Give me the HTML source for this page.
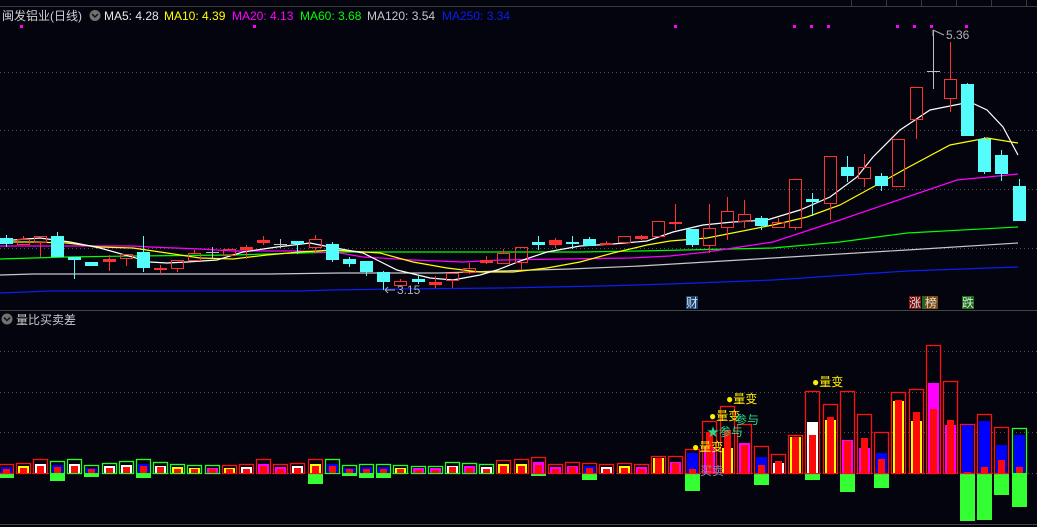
<!DOCTYPE html>
<html><head><meta charset="utf-8"><style>
html,body{margin:0;padding:0;background:#04040f;overflow:hidden}
svg{display:block}
text{font-family:"Liberation Sans","Noto Sans CJK SC",sans-serif;font-size:12px}
</style></head><body>
<svg id="s" width="1037" height="527" xmlns="http://www.w3.org/2000/svg">
<rect width="1037" height="527" fill="#04040f"/>
<line x1="0" y1="6.5" x2="1037" y2="6.5" stroke="#3a3a3a"/>
<g stroke="#3a3a3a"><line x1="851.5" y1="0" x2="851.5" y2="6"/><line x1="886.5" y1="0" x2="886.5" y2="6"/><line x1="921.5" y1="0" x2="921.5" y2="6"/><line x1="956.5" y1="0" x2="956.5" y2="6"/><line x1="991.5" y1="0" x2="991.5" y2="6"/><line x1="1026.5" y1="0" x2="1026.5" y2="6"/></g>
<g stroke="#505050" stroke-dasharray="1,3"><line x1="0" y1="72.5" x2="1037" y2="72.5"/><line x1="0" y1="130.5" x2="1037" y2="130.5"/><line x1="0" y1="189.5" x2="1037" y2="189.5"/><line x1="0" y1="248.5" x2="1037" y2="248.5"/>
<line x1="0" y1="351.5" x2="1037" y2="351.5"/><line x1="0" y1="392.5" x2="1037" y2="392.5"/><line x1="0" y1="432.5" x2="1037" y2="432.5"/><line x1="0" y1="473.5" x2="1037" y2="473.5"/></g>
<line x1="0" y1="310.5" x2="1037" y2="310.5" stroke="#444"/>
<line x1="0" y1="524.5" x2="1037" y2="524.5" stroke="#444"/>
<g id="g"></g>
<text x="2" y="20" fill="#d0d0d0">闽发铝业(日线)</text>
<circle cx="95" cy="15.5" r="5.5" fill="#707070"/><path d="M92 14 L95 17 L98 14" stroke="#111" stroke-width="1.5" fill="none"/>
<text x="104" y="20" fill="#e8e8e8">MA5: 4.28</text>
<text x="164" y="20" fill="#ffff00">MA10: 4.39</text>
<text x="232" y="20" fill="#ff00ff">MA20: 4.13</text>
<text x="300" y="20" fill="#00ff00">MA60: 3.68</text>
<text x="367" y="20" fill="#c8c8c8">MA120: 3.54</text>
<text x="442" y="20" fill="#0a1ef0">MA250: 3.34</text>
<circle cx="7" cy="319" r="5.5" fill="#707070"/><path d="M4 317.5 L7 320.5 L10 317.5" stroke="#111" stroke-width="1.5" fill="none"/>
<text x="16" y="324" fill="#c8c8c8">量比买卖差</text>
<path d="M933 30 L933 36 M933 30 L944 35" stroke="#aaa" fill="none"/>
<text x="946" y="39" fill="#b0b0b0">5.36</text>
<path d="M385 290 L395 290 M385 290 L388 287 M385 290 L388 293" stroke="#aaa" fill="none"/>
<text x="397" y="294" fill="#b0b0b0">3.15</text>
<rect x="686" y="296" width="12" height="13" fill="#15467a"/><text x="686" y="307" fill="#ddd">财</text>
<rect x="909" y="296" width="12" height="13" fill="#7a1010"/><text x="909" y="307" fill="#ddd">涨</text>
<rect x="922" y="296" width="3" height="13" fill="#1a6a1a"/>
<rect x="925" y="296" width="13" height="13" fill="#7a4a10"/><text x="925" y="307" fill="#ddd">榜</text>
<rect x="962" y="296" width="12" height="13" fill="#137013"/><text x="962" y="307" fill="#ddd">跌</text>
<g id="lab"></g>
</svg>
<script>
var NS="http://www.w3.org/2000/svg",G=document.getElementById('g');
function el(t,a){var e=document.createElementNS(NS,t);for(var k in a)e.setAttribute(k,a[k]);G.appendChild(e);return e;}
function cx(i){return 5.5+17.17*i;}
// MA lines
var ma=[
["#00ff00","0,259 33,258 67,257 133,256 233,255 300,253 340,252 410,252 580,252 640,251 773,248 840,242 907,233 1018,227"],
["#c8c8c8","0,275 33,274 270,274 340,273 440,273 500,271 570,269 640,266 773,258 907,250 1018,243"],
["#0a1ef0","0,293 50,291 300,291 400,289 560,288 770,286 340,284".replace("770,286 340,284","")+"330,284 400,282 500,281 600,279 773,273 907,268 1018,267"],
["#ff00ff","0,246 83,246 133,246 150,247 200,249 233,251 300,251 340,253 363,257 413,260 463,262 500,260 563,259 630,258 670,256 707,252 773,242 840,220 907,197 957,180 1018,174"],
["#ffff00","0,242 33,242 67,243 100,247 133,248 167,253 200,258 233,259 267,255 300,252 333,250 380,253 413,262 447,268 480,272 513,272 547,268 580,262 613,253 647,245 670,241 707,238 773,225 807,217 840,205 873,187 907,168 950,145 987,138 1018,143"],
["#ffffff","0,241 40,238 70,242 100,248 150,262 167,263 187,262 217,260 243,252 277,247 310,243 330,247 363,253 397,270 430,278 453,280 480,275 497,270 523,260 547,252 580,246 613,244 647,241 673,232 703,225 733,222 767,220 800,210 830,197 857,177 873,157 900,130 930,110 970,102 987,110 1003,127 1018,155"]];
// fix blue
ma[2][1]="0,293 50,291 300,291 400,289 560,288 330,284".replace(" 330,284","")+" 600,287 640,286 700,285 773,273 907,268 1018,267";
ma[2][1]="0,293 50,291 300,291 330,290 400,289 500,288 600,286 670,284 773,280 907,271 1018,267";
ma.forEach(function(m){el('polyline',{points:m[1],fill:'none',stroke:m[0],'stroke-width':1.2});});
var C=[
["c",238,244,235,247],["r",239,244,236,244],["r",236,242,236,257],["c",236,257,232,257],["c",257,260,257,279],["c",262,266,262,266],["r",259,262,255,271],["r",254,258,254,266],["c",252,268,236,272],["R",268,270,265,274],
["r",260,268,260,272],["r",253,260,250,260],["g",252,253,247,258],["r",249,255,249,255],["r",247,250,245,259],["R",240,243,236,245],["g",244,245,239,248],["c",241,244,241,254],["r",239,247,235,252],["c",244,260,242,262],
["c",259,264,257,267],["c",261,272,261,276],["c",272,282,271,290],["r",281,285,279,287],["c",279,282,275,284],["r",282,285,276,288],["r",273,280,273,288],["r",268,272,263,274],["R",260,263,256,264],["r",253,263,249,263],
["r",247,262,247,270],["c",242,245,236,250],["R",240,245,238,248],["c",242,244,236,249],["c",239,246,237,246],["r",243,244,241,245],["r",236,242,236,242],["r",236,239,235,240],["r",221,236,221,236],["r",222,224,204,230],
["c",229,245,229,247],["r",228,245,204,253],["r",211,227,197,240],["r",214,221,200,228],["c",218,226,216,230],["r",222,227,218,227],["r",179,227,179,230],["c",199,202,193,216],["r",156,203,156,220],["c",167,176,156,182],
["r",167,178,154,187],["c",176,186,173,191],["r",139,186,139,187],["r",87,119,87,139],["g",71,72,30,89],["r",79,98,42,112],["c",84,136,83,136],["c",139,172,137,174],["c",155,174,150,181],["c",186,221,179,221]];
C.forEach(function(d,i){var x=Math.round(cx(i)),t=d[0],bt=d[1],bb=d[2],h=d[3],l=d[4];
var col=t=='c'?'#54fcfc':t=='g'?'#c0c0c0':'#ff3232';
if(t=='g'){el('line',{x1:x+.5,y1:h,x2:x+.5,y2:l,stroke:col});el('line',{x1:x-6,y1:bt+.5,x2:x+7,y2:bt+.5,stroke:col});return;}
if(h<bt)el('line',{x1:x+.5,y1:h,x2:x+.5,y2:bt,stroke:col});
if(l>bb)el('line',{x1:x+.5,y1:bb,x2:x+.5,y2:l,stroke:col});
if(t=='r'&&bb-bt>3)el('rect',{x:x-5.5,y:bt+.5,width:12,height:bb-bt,fill:'none',stroke:col});
else el('rect',{x:x-6,y:bt,width:13,height:Math.max(bb-bt,2),fill:col});
});
// magenta dots
[22,255,676,795,812,829,898,915,932,967].forEach(function(x){el('rect',{x:x-2,y:25,width:3,height:3,fill:'#ff00ff'});});
// lower bars: top, innerColor, outline, innerTop, redTop, negBottom
var W='#ffffff',Y='#ffff00',M='#ff00ff',B='#0000ff';
var L=[[464,B,'r',0,0,478],[463,Y,'r'],[459,W,'r'],[461,B,'g',0,0,481],[459,W,'g'],[465,B,'g',0,0,477],[463,W,'g'],[461,W,'g'],[459,B,'g',0,0,478],[462,W,'g'],
[464,Y,'g'],[465,Y,'g'],[465,M,'g'],[465,Y,'r'],[464,W,'r'],[459,M,'r'],[464,M,'r'],[463,W,'r'],[459,Y,'r',0,0,484],[459,B,'g'],
[465,B,'g',0,0,476],[464,B,'g',0,0,478],[464,B,'g',0,0,478],[465,Y,'g'],[466,M,'g'],[466,M,'g'],[462,W,'g'],[463,M,'g'],[464,W,'g'],[460,Y,'r'],
[459,Y,'r'],[457,M,'r',0,0,476],[464,M,'r'],[462,M,'r'],[463,B,'r',0,0,480],[464,W,'r'],[463,Y,'r'],[464,M,'r'],
[456,Y,'r',458,458],[456,M,'r',462,463],[449,B,'r',453,469,491],[421,M,'r',447,432],[406,Y,'r',448,430],[424,M,'r',443,445],[446,B,'r',457,465,485],[454,W,'r',463,461],[435,Y,'r',437,437],[391,W,'r',422,435,480],
[404,Y,'r',420,417],[391,M,'r',440,441,492],[414,M,'r',448,438],[432,B,'r',453,459,488],[392,Y,'r',401,400],[389,Y,'r',421,412],[345,M,'r',383,409],[381,M,'r',425,420],[424,B,'r',425,472,521],[414,B,'r',421,467,520],[427,B,'r',445,460,495],[428,B,'g',435,467,507]];
var base=474;
L.forEach(function(d,i){var x=Math.round(cx(i)),top=d[0],it=d[3]||Math.round(top+0.3*(base-top)),rt=d[4]||Math.round(top+0.45*(base-top));
if(d[5])el('rect',{x:x-7,y:base,width:15,height:d[5]-base,fill:'#33ff33'});
el('rect',{x:x-6.5,y:top+.5,width:14,height:base-top-1,fill:'none',stroke:d[2]=='r'?'#ff1010':'#22ff22','stroke-width':1.3});
el('rect',{x:x-5,y:it,width:11,height:base-it-1,fill:d[1]});
el('rect',{x:x-3,y:rt,width:7,height:base-rt-1,fill:'#ff0a0a'});
});
function tx(x,y,c,s){var e=el('text',{x:x,y:y,fill:c});e.textContent=s;}
tx(812,386,'#ffee00','●量变');tx(726,403,'#ffee00','●量变');tx(709,420,'#ffee00','●量变');
tx(735,424,'#22dd88','参与');tx(707,436,'#22dd88','★参与');tx(692,451,'#ffee00','●量变');
tx(700,475,'#8888cc','买卖');
</script>
</body></html>
